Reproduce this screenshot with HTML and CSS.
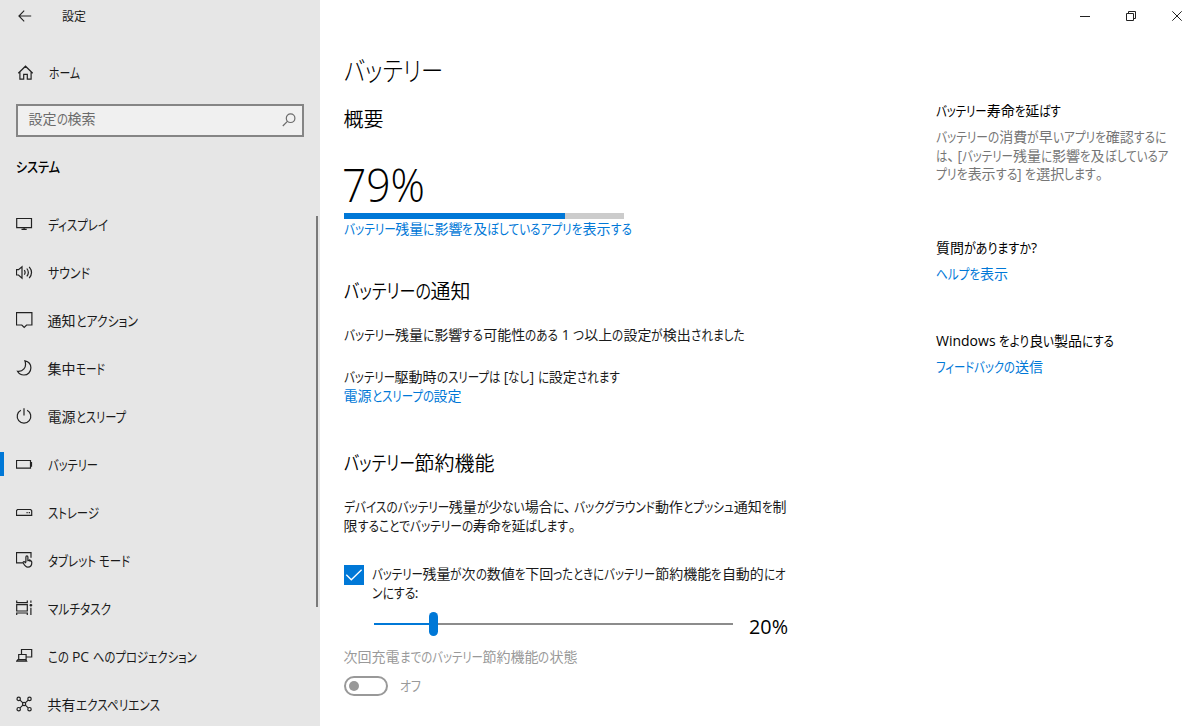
FILE: index.html
```html
<!DOCTYPE html>
<html lang="ja">
<head>
<meta charset="utf-8">
<title>設定</title>
<link rel="stylesheet" href="styles.css">
</head>
<body>
<div class="window">
  <aside class="sidebar">
    <header class="topbar">
      <svg class="back" width="14" height="12" viewBox="0 0 14 12"><path d="M6.2.6.9 6l5.3 5.4M1 6h12.2"/></svg>
      <span class="line app-name" data-w="24">設定</span>
    </header>
    <a class="item home"><svg class="icon" viewBox="0 0 18 18"><path d="M1.300 9.200 8.500 2.200l7.200 7M2.900 7.800v7.400h3.800v-4.900h3.600v4.900h3.800V7.800"/></svg><span class="line" data-w="31">ホーム</span></a>
    <div class="search">
      <span class="line" data-w="67">設定の検索</span>
      <svg width="14" height="14" viewBox="0 0 14 14"><circle cx="8.6" cy="5.2" r="4.3"/><path d="M5.4 8.3.8 13"/></svg>
    </div>
    <h2 class="group"><span class="line" data-w="44">システム</span></h2>
    <nav class="nav">
      <a class="item"><svg class="icon" viewBox="0.5 0.8 18 18"><path d="M1.2 3.300h14.800v9.200H1.200zM8.600 12.500v1.800M6 14.200h5.200"/></svg><span class="line" data-w="60">ディスプレイ</span></a>
      <a class="item"><svg class="icon" viewBox="0.5 0.8 18 18"><path d="M1 6.500h2L6.500 3.500v11.500L3 11.800H1zM8.800 7c1 1.400 1 3.100 0 4.500M11.300 5.300c1.900 2.400 1.900 5.500 0 7.900M13.700 3.600c2.800 3.400 2.800 7.900 0 11.300"/></svg><span class="line" data-w="42">サウンド</span></a>
      <a class="item"><svg class="icon" viewBox="0.5 0.8 18 18"><path d="M1 1.500h15.400v12.300h-5.300l-2.400 2.500-2.400-2.500H1z"/></svg><span class="line" data-w="90">通知とアクション</span></a>
      <a class="item"><svg class="icon" viewBox="0.5 0.8 18 18"><path d="M9.400 1.600c3.700.8 6 3.400 6 7 0 4.200-3 7.200-7 7.200-2.900 0-5.200-1.300-6.400-3.700 4.900.6 9.800-3.300 7.400-10.500z"/></svg><span class="line" data-w="57">集中モード</span></a>
      <a class="item"><svg class="icon" viewBox="0.5 0.8 18 18"><path d="M8.500 1v7.400M5.400 3a6.800 6.800 0 1 0 6.200 0"/></svg><span class="line" data-w="78">電源とスリープ</span></a>
      <a class="item selected"><svg class="icon" viewBox="0.5 0.8 18 18"><path d="M1 5.300h14v7.600H1zM15 7.300h1v3.600h-1"/></svg><span class="line" data-w="50">バッテリー</span></a>
      <a class="item"><svg class="icon" viewBox="0.5 0.8 18 18"><path d="M2 6.300h13.200l1 1.200v4.700H1V7.500zM11 9.500h1.200M13.200 9.500h1.300"/></svg><span class="line" data-w="51">ストレージ</span></a>
      <a class="item"><svg class="icon" viewBox="0.5 0.8 18 18"><path d="M7.500 11.600H1V1.500h14.500v5M10.400 11V5.800c0-1.500 2-1.500 2 0V9c2.300 0 3.900.500 3.900 2.300 0 3-1.300 4.700-4 4.700-2.200 0-3.300-1.700-4.500-4.100-.6-1.400.8-2 1.600-1.100l1 1.200M12.400 9v1M14.300 8v2.500"/></svg><span class="line" data-w="83">タブレット モード</span></a>
      <a class="item"><svg class="icon" viewBox="0.5 0.8 18 18"><path d="M1.200 1.200v2.300h10.600V1.200M1.200 5.500h10.600v6.300H1.200zM1.200 15.800v-2h10.600v2M15.400 1.200v2.300M15.400 8.500v7.300"/><path d="M15.400 4.800v2.600M14.100 6.100h2.600" stroke-width="1.600"/></svg><span class="line" data-w="63">マルチタスク</span></a>
      <a class="item"><svg class="icon" viewBox="0.5 0.8 18 18"><path d="M6 7V2.300h10.200v7.500h-5M3.200 7.300h7.400v5H3.200zM1.300 13.900h9.800l-.8-1.400H2.500z"/></svg><span class="line" data-w="149">この PC へのプロジェクション</span></a>
      <a class="item"><svg class="icon" viewBox="0.5 0.8 18 18"><circle cx="3.200" cy="3.700" r="1.700"/><circle cx="14" cy="3.700" r="1.700"/><circle cx="3.200" cy="14" r="1.700"/><circle cx="14" cy="14" r="1.700"/><circle cx="8.600" cy="8.800" r="1.600"/><path d="m4.500 4.900 2.900 2.800m2.400 0 2.900-2.800M4.500 12.700l2.900-2.800m2.400 0 2.900 2.800"/></svg><span class="line" data-w="112">共有エクスペリエンス</span></a>
    </nav>
    <div class="scrollbar"></div>
  </aside>

  <main class="content">
    <h1><span class="line" data-w="99">バッテリー</span></h1>
    <h2 class="overview"><span class="line" data-w="40">概要</span></h2>
    <div class="percent"><span class="line" data-w="83">79%</span></div>
    <div class="meter"><div class="meter-fill" style="width:79%"></div></div>
    <a class="link row"><span class="line" data-w="288">バッテリー残量に影響を及ぼしているアプリを表示する</span></a>

    <h2 class="notices"><span class="line" data-w="127">バッテリーの通知</span></h2>
    <p class="row detected"><span class="line" data-w="401">バッテリー残量に影響する可能性のある 1 つ以上の設定が検出されました</span></p>
    <p class="row sleep"><span class="line" data-w="276">バッテリー駆動時のスリープは [なし] に設定されます</span></p>
    <a class="link row"><span class="line" data-w="118">電源とスリープの設定</span></a>

    <h2 class="saver"><span class="line" data-w="151">バッテリー節約機能</span></h2>
    <p class="intro"><span class="line" data-w="443">デバイスのバッテリー残量が少ない場合に、バックグラウンド動作とプッシュ通知を制</span><span class="line" data-w="235">限することでバッテリーの寿命を延ばします。</span></p>
    <label class="auto">
      <span class="checkbox"><svg width="20" height="20" viewBox="0 0 20 20"><path d="m2.300 9.800 5 5L17.600 4.700"/></svg></span>
      <span class="auto-text"><span class="line" data-w="414">バッテリー残量が次の数値を下回ったときにバッテリー節約機能を自動的にオ</span><span class="line" data-w="47">ンにする:</span></span>
    </label>
    <div class="threshold">
      <div class="slider"><div class="done"></div><div class="thumb"></div><div class="rest"></div></div>
      <span class="line value" data-w="39">20%</span>
    </div>
    <p class="row disabled"><span class="line" data-w="234">次回充電までのバッテリー節約機能の状態</span></p>
    <div class="toggle-row disabled"><span class="toggle"></span><span class="line" data-w="21">オフ</span></div>
  </main>

  <aside class="help">
    <div class="controls">
      <svg width="12" height="12" viewBox="0 0 12 12"><path d="M1 6.500h10"/></svg>
      <svg width="12" height="12" viewBox="0 0 12 12"><path d="M1.500 3.500h7v7h-7zM3.500 3.200V1.500h7v7H8.800"/></svg>
      <svg width="12" height="12" viewBox="0 0 12 12"><path d="m1.300 1.300 9.400 9.400m0-9.400-9.400 9.400"/></svg>
    </div>
    <section class="tip">
      <h3><span class="line" data-w="125">バッテリー寿命を延ばす</span></h3>
      <p class="hint"><span class="line" data-w="230">バッテリーの消費が早いアプリを確認するに</span><span class="line" data-w="232">は、[バッテリー残量に影響を及ぼしているア</span><span class="line" data-w="170">プリを表示する] を選択します。</span></p>
    </section>
    <section class="question">
      <h3><span class="line" data-w="101">質問がありますか?</span></h3>
      <a class="link"><span class="line" data-w="72">ヘルプを表示</span></a>
    </section>
    <section class="feedback">
      <h3><span class="line" data-w="178">Windows をより良い製品にする</span></h3>
      <a class="link"><span class="line" data-w="107">フィードバックの送信</span></a>
    </section>
  </aside>
</div>
<script src="kana.js"></script>
</body>
</html>
```
FILE: kana.js
```js
// data-w is the measure of the line in pixels.
const KANA = /([\u3040-\u30ff]+)/;
const SPLIT = /([\u3040-\u30ff]+|[、。])/;

function condense(run, scale) {
  const width = run.getBoundingClientRect().width;
  run.style.width = width * scale + 'px';
  run.firstChild.style.transform = `scaleX(${scale})`;
}

for (const line of document.querySelectorAll('.line')) {
  const text = line.textContent;
  const hasKana = KANA.test(text);
  const parts = hasKana ? text.split(SPLIT).filter(Boolean) : [text];
  line.textContent = '';
  const runs = [];
  for (const part of parts) {
    if (part === '、' || part === '。') {
      const stop = document.createElement('span');
      stop.className = 'stop';
      stop.textContent = part;
      line.append(stop);
      continue;
    }
    if (hasKana && !KANA.test(part)) {
      line.append(part);
      continue;
    }
    const run = document.createElement('span');
    const glyphs = document.createElement('span');
    run.className = 'run';
    glyphs.className = 'glyphs';
    glyphs.textContent = part;
    run.append(glyphs);
    line.append(run);
    runs.push(run);
  }
  const total = line.getBoundingClientRect().width;
  const flexible = runs.reduce((sum, run) => sum + run.getBoundingClientRect().width, 0);
  const scale = (Number(line.dataset.w) - (total - flexible)) / flexible;
  runs.forEach(run => condense(run, scale));
}
```
FILE: styles.css
```css
* { box-sizing: border-box; }
body {
  margin: 0;
  background: #fff;
  color: #1a1a1a;
  font: 14px/18px "Open Sans", "Noto Sans CJK JP", sans-serif;
  font-feature-settings: "palt";
}
h1, h2, h3, p { margin: 0; font-weight: 400; }
svg { display: block; fill: none; stroke: #222; stroke-width: 1.2; flex: none; }

.line { display: block; width: max-content; white-space: pre; }
.run, .glyphs { display: inline-block; white-space: pre; }
.glyphs { transform-origin: 0 50%; }
.stop { padding-right: 3px; }

.window { display: grid; grid-template-columns: 320px 592px 1fr; width: 1200px; height: 726px; overflow: hidden; }

.sidebar { position: relative; background: #e6e6e6; height: 726px; overflow: hidden; }
.topbar { display: flex; align-items: center; height: 32px; padding-left: 18px; gap: 30px; }
.topbar svg { stroke-width: 1.1; }
.app-name { font-size: 12px; padding-top: 2px; }
.item { display: flex; align-items: center; height: 48px; padding-left: 16px; gap: 14px; }
.nav .item { gap: 13.5px; }
.icon { width: 18px; height: 18px; }
.home { margin-top: 17px; padding-left: 17px; }
.search {
  display: flex; justify-content: space-between; align-items: center;
  height: 33px; margin: 7px 16px 0; padding: 0 6px 3px 10.500px;
  border: 2px solid #858585; background: #f0f0f0; color: #6b6b6b;
}
.search svg { stroke: #6b6b6b; margin-top: 2px; }
.group { margin: 21px 0 0 16px; font-size: 14px; line-height: 18px; font-weight: 500; color: #000; }
.nav { margin-top: 25px; }
.selected { position: relative; }
.selected::before { content: ""; position: absolute; left: 0; top: 11px; width: 4px; height: 24px; background: #0078d7; }
.scrollbar { position: absolute; left: 316px; top: 216px; width: 2px; height: 391px; background: #7a7a7a; }

.content { padding: 51px 0 0 24px; }
.content .line { margin-left: -0.5px; }
h1 { font-size: 27px; line-height: 40px; font-weight: 300; color: #000; }
.content h2 { font-size: 20px; line-height: 28px; font-weight: 350; color: #000; }
.content .overview { margin-top: 15px; }
.percent { margin-top: 25px; font-size: 46px; line-height: 50px; font-weight: 300; color: #000; }
.content .percent .line { margin-left: -2px; }
.meter { width: 280px; height: 6px; margin-top: 4px; background: #ccc; }
.meter-fill { height: 6px; background: #0078d7; }
.row { display: block; height: 18px; }
.meter + .row { margin-top: 1px; }
.link { display: block; color: #0078d7; }
.content .notices { margin-top: 40px; }
.detected { margin-top: 20px; }
.sleep { margin: 24px 0 1px; }
.content .saver { margin-top: 45px; }
.intro { margin-top: 19px; line-height: 19px; }
.auto { display: flex; gap: 8px; margin-top: 30px; }
.checkbox { width: 20px; height: 20px; background: #0078d7; }
.checkbox svg { stroke: #fff; stroke-width: 1.3; }
.auto-text { line-height: 19px; margin-top: -1px; }
.threshold { display: flex; align-items: center; gap: 16px; height: 24px; margin: 10px 0 0 30px; }
.slider { display: flex; align-items: center; width: 359px; }
.done { width: 55px; height: 2px; background: #0078d7; }
.thumb { width: 9px; height: 24px; border-radius: 4.5px; background: #0078d7; }
.rest { flex: 1; height: 2px; background: #8c8c8c; }
.value { font-size: 20px; line-height: 28px; color: #000; padding-top: 5px; }
.disabled { color: #999; }
.row.disabled { margin-top: 12px; }
.toggle-row { display: flex; align-items: center; gap: 12px; margin-top: 10px; }
.toggle { display: flex; align-items: center; width: 44px; height: 20px; padding-left: 3px; border: 2px solid #999; border-radius: 10px; }
.toggle::before { content: ""; width: 10px; height: 10px; border-radius: 50%; background: #999; }

.help { padding-left: 24px; }
.controls { display: flex; gap: 34px; height: 32px; align-items: center; padding-left: 142.500px; }
.controls svg { stroke-width: 1; }
.help h3 { font-size: 14px; line-height: 18px; color: #000; }
.tip { margin-top: 70px; }
.hint { margin-top: 8px; line-height: 18.6px; color: #767676; }
.question { margin-top: 55px; }
.feedback { margin-top: 49px; }
.help .link { margin-top: 8px; }
```
